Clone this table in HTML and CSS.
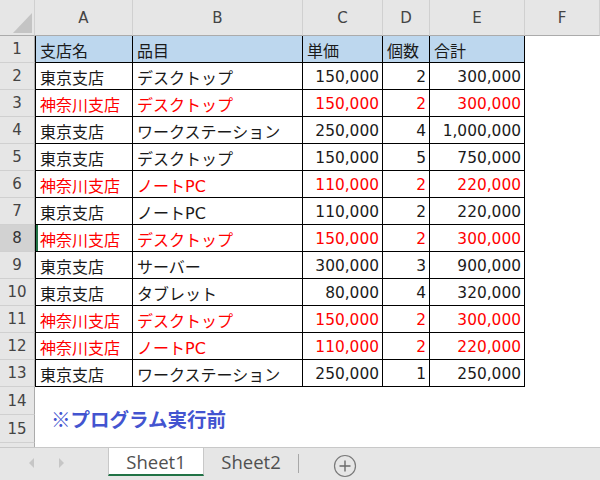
FILE: index.html
```html
<!DOCTYPE html>
<html lang="ja">
<head>
<meta charset="utf-8">
<link rel="stylesheet" href="styles.css">
</head>
<body>
<div class="sheet">
  <div class="corner"><svg width="34" height="35" viewBox="0 0 34 35"><polygon points="13,33 32,33 32,13" fill="#c4c4c4"/></svg></div>
  <div class="ch">A</div><div class="ch">B</div><div class="ch">C</div><div class="ch">D</div><div class="ch">E</div><div class="ch">F</div>

  <div class="rh">1</div><div class="c a hd">支店名</div><div class="c hd">品目</div><div class="c hd">単価</div><div class="c hd">個数</div><div class="c hd">合計</div><div class="f"></div>
  <div class="rh">2</div><div class="c a">東京支店</div><div class="c">デスクトップ</div><div class="c num">150,000</div><div class="c num">2</div><div class="c num">300,000</div><div class="f"></div>
  <div class="rh">3</div><div class="c a red">神奈川支店</div><div class="c red">デスクトップ</div><div class="c num red">150,000</div><div class="c num red">2</div><div class="c num red">300,000</div><div class="f"></div>
  <div class="rh">4</div><div class="c a">東京支店</div><div class="c">ワークステーション</div><div class="c num">250,000</div><div class="c num">4</div><div class="c num">1,000,000</div><div class="f"></div>
  <div class="rh">5</div><div class="c a">東京支店</div><div class="c">デスクトップ</div><div class="c num">150,000</div><div class="c num">5</div><div class="c num">750,000</div><div class="f"></div>
  <div class="rh">6</div><div class="c a red">神奈川支店</div><div class="c red">ノートPC</div><div class="c num red">110,000</div><div class="c num red">2</div><div class="c num red">220,000</div><div class="f"></div>
  <div class="rh">7</div><div class="c a">東京支店</div><div class="c">ノートPC</div><div class="c num">110,000</div><div class="c num">2</div><div class="c num">220,000</div><div class="f"></div>
  <div class="rh sel">8</div><div class="c a red active">神奈川支店</div><div class="c red">デスクトップ</div><div class="c num red">150,000</div><div class="c num red">2</div><div class="c num red">300,000</div><div class="f"></div>
  <div class="rh">9</div><div class="c a">東京支店</div><div class="c">サーバー</div><div class="c num">300,000</div><div class="c num">3</div><div class="c num">900,000</div><div class="f"></div>
  <div class="rh">10</div><div class="c a">東京支店</div><div class="c">タブレット</div><div class="c num">80,000</div><div class="c num">4</div><div class="c num">320,000</div><div class="f"></div>
  <div class="rh">11</div><div class="c a red">神奈川支店</div><div class="c red">デスクトップ</div><div class="c num red">150,000</div><div class="c num red">2</div><div class="c num red">300,000</div><div class="f"></div>
  <div class="rh">12</div><div class="c a red">神奈川支店</div><div class="c red">ノートPC</div><div class="c num red">110,000</div><div class="c num red">2</div><div class="c num red">220,000</div><div class="f"></div>
  <div class="rh">13</div><div class="c a">東京支店</div><div class="c">ワークステーション</div><div class="c num">250,000</div><div class="c num">1</div><div class="c num">250,000</div><div class="f"></div>

  <div class="rh">14</div><div class="note">※プログラム実行前</div>
  <div class="rh">15</div>
  <div class="rh last"></div><div class="blank"></div>
</div>
<div class="tabbar">
  <div class="nav">
    <svg width="8" height="12" viewBox="0 0 8 12"><polygon points="6,1 6,11 1,6" fill="#c6c6c6"/></svg>
    <svg width="8" height="12" viewBox="0 0 8 12"><polygon points="2,1 2,11 7,6" fill="#c6c6c6"/></svg>
  </div>
  <div class="tab active-tab">Sheet1</div>
  <div class="tab">Sheet2</div>
  <div class="sep"></div>
  <div class="add">
    <svg width="24" height="24" viewBox="0 0 24 24"><circle cx="12" cy="12" r="10.5" fill="none" stroke="#7a7a7a" stroke-width="1.2"/><path d="M12 6.5V17.5M6.5 12H17.5" stroke="#6a6a6a" stroke-width="1.4" fill="none"/></svg>
  </div>
</div>
</body>
</html>
```

FILE: styles.css
```css
* { box-sizing: border-box; }
html, body { margin: 0; padding: 0; }
body {
  width: 600px;
  height: 480px;
  overflow: hidden;
  background: #fff;
  font-family: "DejaVu Sans", "Noto Sans CJK JP", sans-serif;
}
.sheet {
  display: grid;
  grid-template-columns: 35px 98px 170px 80px 47px 95px 1fr;
  grid-template-rows: 36px repeat(13, 27px) 28px 28px 4px;
  height: 447px;
}
.corner {
  background: #e6e6e6;
  border-right: 1px solid #d0d0d0;
  border-bottom: 1px solid #ababab;
}
.corner svg { display: block; }
.ch {
  background: #e6e6e6;
  border-right: 1px solid #d0d0d0;
  border-bottom: 1px solid #ababab;
  display: flex;
  align-items: center;
  justify-content: center;
  font-size: 15px;
  color: #444;
}
.rh {
  background: #e6e6e6;
  border-right: 1px solid #ababab;
  border-bottom: 1px solid #d0d0d0;
  display: flex;
  align-items: center;
  justify-content: center;
  font-size: 15px;
  color: #444;
}
.rh.sel { background: #d2d2d2; color: #333; }
.rh.last { border-bottom: none; }
.c {
  border-right: 1px solid #000;
  border-bottom: 1px solid #000;
  display: flex;
  align-items: center;
  padding: 1px 3px 0 4px;
  white-space: nowrap;
  overflow: hidden;
  font-size: 16px;
  color: #1a1a1a;
}
.c.a { border-left: 1px solid #000; }
.c.active { box-shadow: inset 2px 0 0 #217346; }
.c.hd { background: #bdd7ee; }
.c.num { justify-content: flex-end; padding-right: 3px; font-size: 15.4px; }
.c.red { color: #ff0000; }
.f { background: #fff; }
.note {
  grid-column: 2 / -1;
  grid-row: span 2;
  padding: 21px 0 0 16px;
  font-family: "Noto Sans CJK JP", sans-serif;
  font-weight: 700;
  font-size: 19.5px;
  line-height: 22px;
  color: #4354d0;
  white-space: nowrap;
}
.blank { grid-column: 2 / -1; background: #fff; }
.tabbar {
  height: 33px;
  background: #e6e6e6;
  border-top: 1px solid #c8c8c8;
  display: flex;
  align-items: flex-start;
}
.nav {
  width: 108px;
  height: 26px;
  display: flex;
  align-items: center;
  padding: 4px 0 0 28px;
  gap: 21px;
}
.nav svg { display: block; }
.tab {
  width: 94px;
  height: 28px;
  display: flex;
  align-items: center;
  justify-content: center;
  font-family: "Open Sans", "Noto Sans", sans-serif;
  font-size: 18.5px;
  color: #505050;
  padding-bottom: 2px;
}
.active-tab {
  width: 96px;
  height: 28px;
  background: #fff;
  border-left: 1px solid #c8c8c8;
  border-right: 1px solid #c8c8c8;
  border-bottom: 2px solid #217346;
  padding-bottom: 0;
}
.sep {
  width: 1px;
  height: 19px;
  margin-top: 6px;
  background: #a8a8a8;
}
.add {
  margin: 6px 0 0 34px;
}
.add svg { display: block; }
```
